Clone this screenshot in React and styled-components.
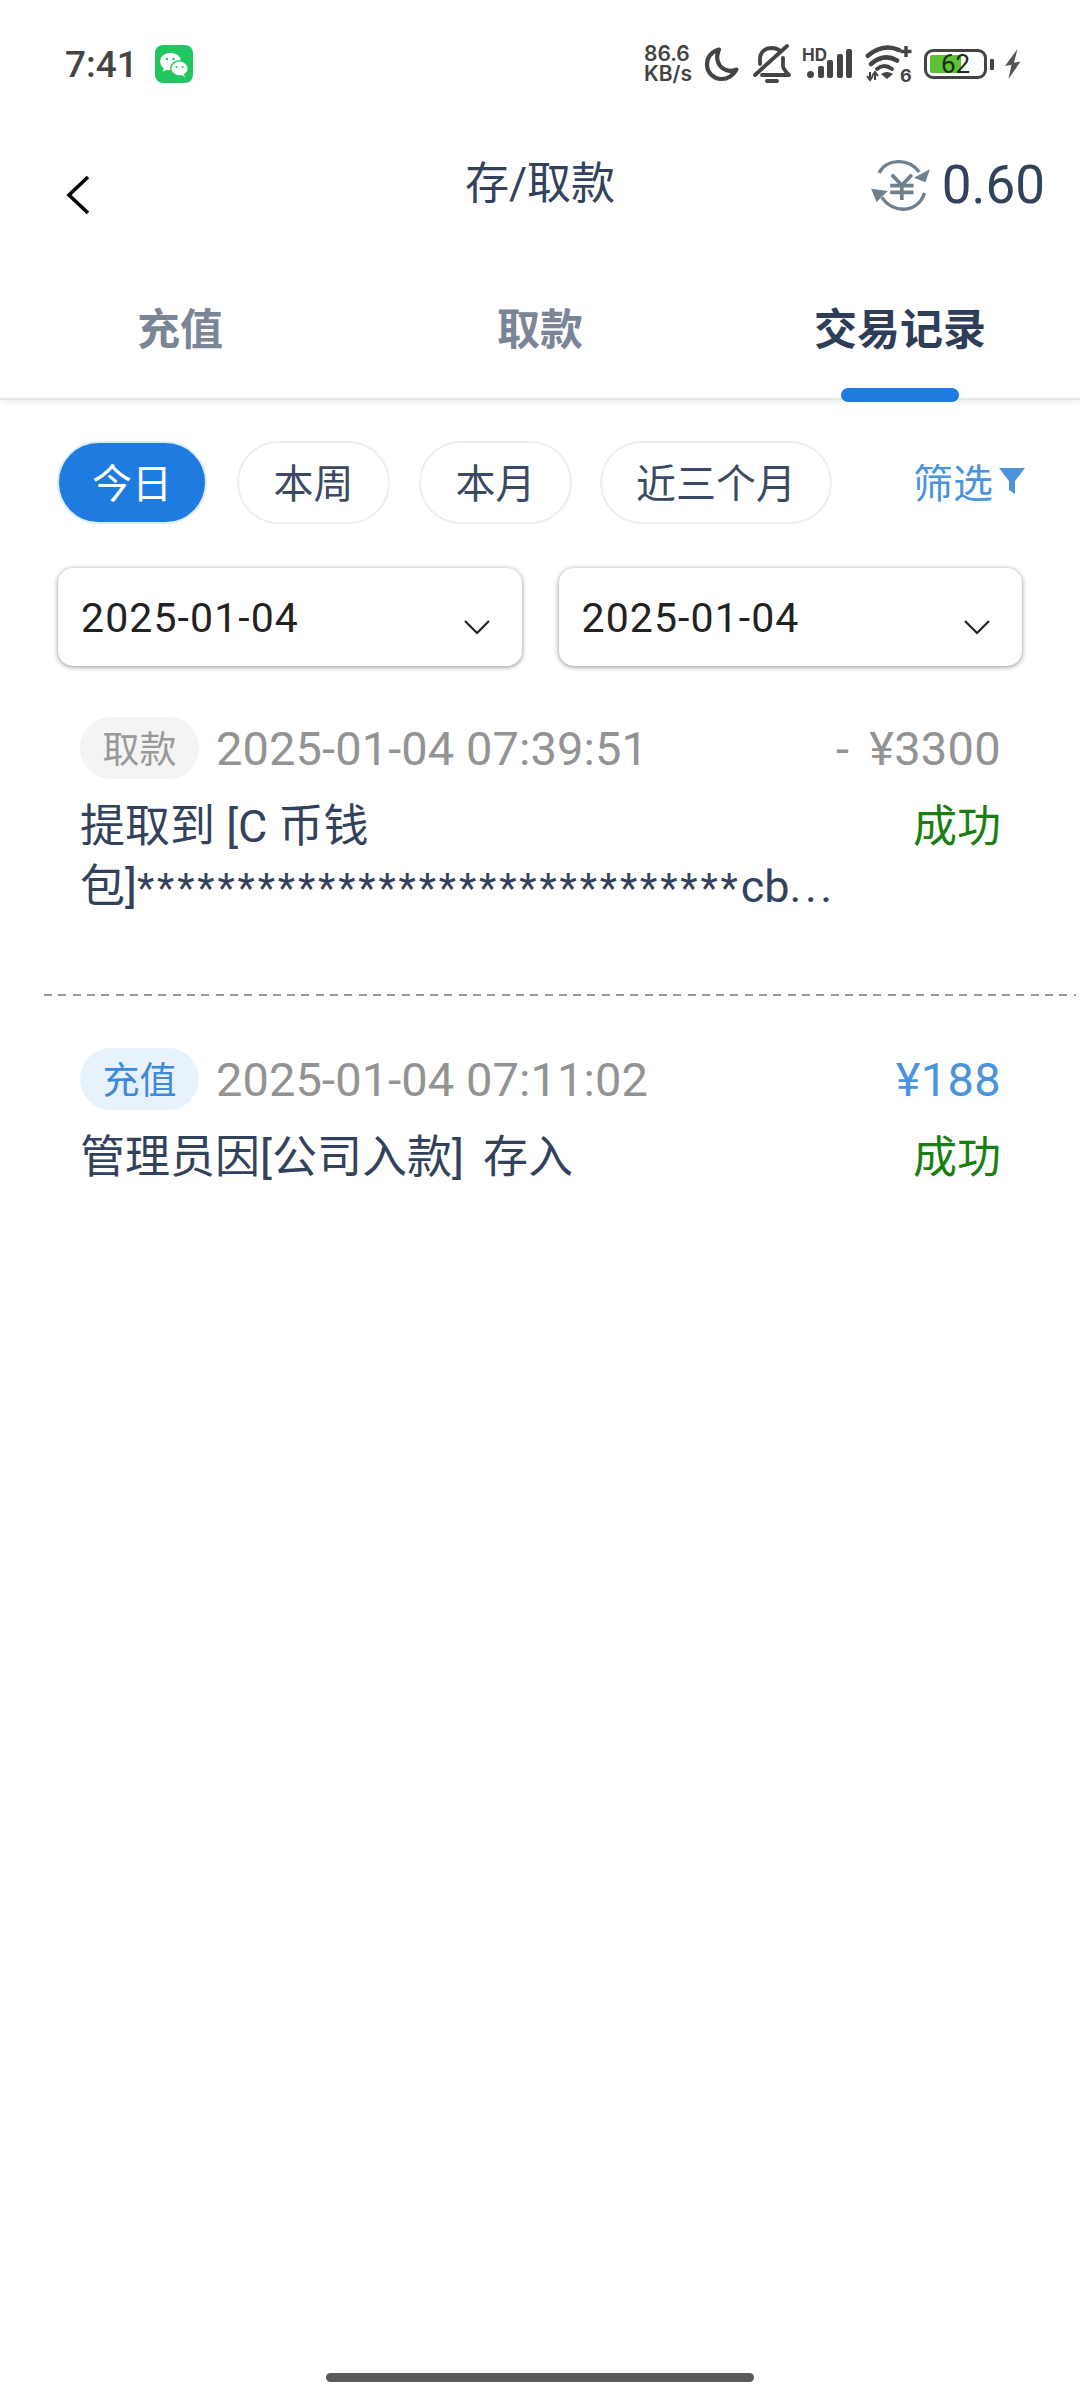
import React from "react";
import styled, { createGlobalStyle } from "styled-components";

const FONT = `Roboto, "Noto Sans CJK SC", sans-serif`;

const Global = createGlobalStyle`
  html, body { margin: 0; padding: 0; background: #fff; }
  body { font-family: ${FONT}; }
  * { box-sizing: border-box; }
`;

const Page = styled.div`
  position: relative;
  width: 1080px;
  height: 2400px;
  background: #fff;
  overflow: hidden;
  display: flex;
  flex-direction: column;
`;

const StatusBar = styled.div`
  height: 128px;
  display: flex;
  align-items: center;
  padding: 0 59px 0 65px;
  color: #444;
`;
const Time = styled.span`
  font-size: 37px;
  font-weight: 500;
  color: #444;
`;
const StatusRight = styled.div`
  margin-left: auto;
  display: flex;
  align-items: center;
`;
const Speed = styled.div`
  font-size: 21px;
  line-height: 20px;
  font-weight: 600;
  font-family: Inter, sans-serif;
  color: #444;
  width: 50px;
  white-space: nowrap;
`;
const IconSvg = styled.svg`
  display: block;
  flex: none;
  overflow: visible;
  margin-left: ${(p) => p.$ml || 0}px;
`;
const BatteryBox = styled.div`
  position: relative;
  width: 63px;
  height: 30px;
  margin-left: 12px;
  border: 3.5px solid #444;
  border-radius: 9px;
  padding: 3px;
  display: flex;
`;
const BatteryFill = styled.div`
  width: 60%;
  background: #5fc236;
  border-radius: 2px;
`;
const BatteryText = styled.span`
  position: absolute;
  left: 0;
  right: 0;
  top: -3.5px;
  text-align: center;
  font-size: 26px;
  line-height: 30px;
  color: #1c2a1c;
  font-family: Roboto, sans-serif;
`;
const BatteryNub = styled.div`
  width: 4px;
  height: 11px;
  background: #444;
  border-radius: 1px;
  margin-left: 3px;
`;

const Header = styled.div`
  height: 120px;
  position: relative;
  display: flex;
  align-items: center;
  justify-content: center;
`;
const BackIcon = styled.svg`
  position: absolute;
  left: 66px;
  top: 47px;
`;
const Title = styled.h1`
  margin: 0 0 16px;
  font-size: 44px;
  font-weight: 400;
  color: #33425c;
`;
const Balance = styled.div`
  position: absolute;
  right: 35px;
  top: 26px;
  display: flex;
  align-items: center;
  gap: 11px;
  font-size: 53px;
  color: #33425c;
  font-weight: 400;
`;

const Tabs = styled.div`
  height: 152px;
  display: grid;
  grid-template-columns: repeat(3, 1fr);
  border-bottom: 2px solid #e8e8e8;
  box-shadow: 0 3px 5px rgba(0, 0, 0, 0.06);
`;
const Tab = styled.div`
  position: relative;
  display: flex;
  justify-content: center;
  padding-top: 56px;
  font-size: 43px;
  line-height: 52px;
  font-weight: 700;
  color: ${(p) => (p.$active ? "#2f3e58" : "#7b8595")};
`;
const TabBar = styled.span`
  position: absolute;
  left: 50%;
  bottom: -4px;
  width: 118px;
  height: 14px;
  margin-left: -59px;
  border-radius: 7px;
  background: #1e7ce0;
`;

const Filters = styled.div`
  display: flex;
  align-items: center;
  padding: 41px 55px 0 57px;
`;
const Chip = styled.div`
  height: 83px;
  width: ${(p) => p.$w}px;
  margin-right: ${(p) => p.$mr}px;
  padding-bottom: 3px;
  border-radius: 42px;
  display: flex;
  align-items: center;
  justify-content: center;
  font-size: 40px;
  color: ${(p) => (p.$active ? "#fff" : "#3b4a63")};
  background: ${(p) => (p.$active ? "#1e7ce0" : "#fff")};
  border: 2.5px solid ${(p) => (p.$active ? "#dcebfb" : "#eeeeef")};
`;
const FilterLink = styled.div`
  margin-left: auto;
  padding-bottom: 4px;
  display: flex;
  align-items: center;
  gap: 6px;
  font-size: 40px;
  color: #4a94de;
`;

const Dates = styled.div`
  display: flex;
  gap: 37px;
  padding: 44px 58px 0;
`;
const DateBox = styled.div`
  flex: 1;
  height: 98px;
  border-radius: 15px;
  background: #fff;
  box-shadow: 0 1px 5px rgba(0, 0, 0, 0.45);
  display: flex;
  align-items: center;
  justify-content: space-between;
  padding: 2px 32px 0 23px;
  font-size: 41px;
  letter-spacing: 1.1px;
  color: #222;
`;
const Chevron = styled.svg`
  margin-top: 18px;
`;

const Record = styled.div`
  padding: ${(p) => (p.$first ? "51px" : "52px")} 79px 0 80px;
  min-height: ${(p) => p.$h}px;
`;
const TopLine = styled.div`
  display: flex;
  align-items: center;
  height: 62px;
`;
const Tag = styled.span`
  width: 119px;
  height: 62px;
  padding-bottom: 2px;
  border-radius: 31px;
  display: flex;
  align-items: center;
  justify-content: center;
  font-size: 37px;
  background: ${(p) => (p.$blue ? "#e7f2fc" : "#f4f4f4")};
  color: ${(p) => (p.$blue ? "#3d8ad8" : "#999")};
`;
const Stamp = styled.span`
  margin-left: 17px;
  font-size: 47px;
  letter-spacing: 0.1px;
  color: #939393;
`;
const Amount = styled.span`
  margin-left: auto;
  font-size: 47px;
  word-spacing: 8px;
  letter-spacing: 0.3px;
  color: ${(p) => (p.$blue ? "#4a94de" : "#939393")};
`;
const BottomLine = styled.div`
  display: flex;
  justify-content: space-between;
  align-items: flex-start;
  margin-top: 18px;
`;
const Desc = styled.div`
  font-size: 45px;
  line-height: 60px;
  color: #33425c;
  white-space: nowrap;
  word-spacing: ${(p) => p.$ws || 0}px;
`;
const Stars = styled.span`
  font-size: 40px;
  letter-spacing: 2.9px;
`;
const Dots = styled.span`
  letter-spacing: 3.5px;
`;
const Status = styled.div`
  font-size: 44px;
  line-height: 60px;
  color: #1a7f12;
`;
const Divider = styled.div`
  height: 2px;
  margin: 0 4px 0 44px;
  background: repeating-linear-gradient(90deg, #999 0 8px, transparent 8px 14.3px);
`;
const HomeBar = styled.div`
  position: absolute;
  left: 326px;
  top: 2373px;
  width: 428px;
  height: 9px;
  border-radius: 5px;
  background: #5a5a5a;
`;

const WeChat = () => (
  <IconSvg $ml={17} width="38" height="38" viewBox="0 0 38 38">
    <rect width="38" height="38" rx="8" fill="#20c65f" />
    <ellipse cx="15.5" cy="16.5" rx="10.5" ry="8.7" fill="#fff" />
    <path d="M9 22l-1 4.5 5.5-2.5z" fill="#fff" />
    <ellipse cx="24.5" cy="23.5" rx="8.8" ry="7.6" fill="#fff" stroke="#20c65f" strokeWidth="1.4" />
    <path d="M28.5 29l2 3-4.5-2z" fill="#fff" />
    <circle cx="12" cy="14" r="1.2" fill="#20c65f" />
    <circle cx="18.5" cy="14" r="1.2" fill="#20c65f" />
    <circle cx="21.5" cy="22" r="1" fill="#20c65f" />
    <circle cx="27.5" cy="22" r="1" fill="#20c65f" />
  </IconSvg>
);

const Moon = () => (
  <IconSvg $ml={10} width="36" height="36" viewBox="0 0 36 36" fill="none">
    <path d="M15 3.5C7.5 6 3 11.5 3 18.5 3 26.5 9.5 33 17.5 33c6.5 0 11.5-3.5 15-9.5-3 1.5-7 2-10.5.5C14 21 11 12 15 3.5z" stroke="#444" strokeWidth="4.2" strokeLinejoin="round" />
  </IconSvg>
);

const BellOff = () => (
  <IconSvg $ml={13} width="38" height="40" viewBox="0 0 38 40" fill="none" stroke="#444" strokeWidth="3.8" strokeLinecap="round" strokeLinejoin="round">
    <path d="M7 20V15C7 8 12 4 19 4c3 0 5 .8 7 2" />
    <path d="M30 14v8c0 3 3 6 6 9H9" />
    <path d="M2 31 34 2" />
    <path d="M14 37h10" />
  </IconSvg>
);

const Signal = () => (
  <IconSvg $ml={9} width="53" height="36" viewBox="-3 0 53 36">
    <text x="-1" y="15" fontSize="17" fontWeight="700" fontFamily="Inter, sans-serif" fill="#444">HD</text>
    <rect x="4" y="25" width="7" height="7" rx="3.5" fill="#444" />
    <rect x="15" y="20" width="6" height="12" rx="2" fill="#444" />
    <rect x="24" y="14" width="6" height="18" rx="2" fill="#444" />
    <rect x="34" y="8" width="6" height="24" rx="2" fill="#444" />
    <rect x="43" y="3" width="6" height="29" rx="2" fill="#444" />
  </IconSvg>
);

const Wifi = () => (
  <IconSvg $ml={13} width="46" height="42" viewBox="0 0 46 42" fill="none">
    <path d="M1.8 12.7Q17 0 33 7" stroke="#444" strokeWidth="4.6" strokeLinecap="round" />
    <path d="M5 21Q18 10 31 17.5" stroke="#444" strokeWidth="4.6" strokeLinecap="round" />
    <path d="M11 26Q18 20 26 26" stroke="#444" strokeWidth="3.8" strokeLinecap="round" />
    <path d="M15 31Q21 27 27 31L21 36z" fill="#444" />
    <path d="M34.5 8.5h11M40 3v11" stroke="#444" strokeWidth="3.4" />
    <path d="M4 29v8M1 33l3 4 3-4M9 37v-8M6 33l3-4 3 4" stroke="#444" strokeWidth="2" />
    <text x="34" y="38.5" fontSize="18" fontWeight="700" fontFamily="Inter, sans-serif" fill="#444">6</text>
  </IconSvg>
);

const Bolt = () => (
  <IconSvg $ml={10} width="17" height="30" viewBox="0 0 17 30">
    <path d="M13.5 0 1 17l6.5-1.2L4.5 30 16.5 12.5l-6.5 1.2z" fill="#555" />
  </IconSvg>
);

const Exchange = () => (
  <svg width="61" height="55" viewBox="25 30 182 165" fill="none">
    <path d="M52 75C72 32 140 28 172 72" stroke="#6f7f8b" strokeWidth="10" />
    <path d="M204 64 191 103 156 89z" fill="#6f7f8b" />
    <path d="M188 135C170 195 95 200 60 148" stroke="#6f7f8b" strokeWidth="10" />
    <path d="M28 122 78 129 44 162z" fill="#6f7f8b" />
    <path d="M90 80l30 32 30-32M85 113h70M85 133h70M120 112v44" stroke="#6f7f8b" strokeWidth="11" />
  </svg>
);

const DateField = ({ value }) => (
  <DateBox>
    {value}
    <Chevron width="26" height="16" viewBox="0 0 26 16" fill="none">
      <path d="M1 2l12 12L25 2" stroke="#222" strokeWidth="2.2" />
    </Chevron>
  </DateBox>
);

export default function App() {
  return (
    <Page>
      <Global />
      <StatusBar>
        <Time>7:41</Time>
        <WeChat />
        <StatusRight>
          <Speed>86.6<br />KB/s</Speed>
          <Moon />
          <BellOff />
          <Signal />
          <Wifi />
          <BatteryBox>
            <BatteryFill />
            <BatteryText>62</BatteryText>
          </BatteryBox>
          <BatteryNub />
          <Bolt />
        </StatusRight>
      </StatusBar>

      <Header>
        <BackIcon width="26" height="40" viewBox="0 0 26 40" fill="none">
          <path d="M22 2 3 20l19 18" stroke="#000" strokeWidth="3.6" />
        </BackIcon>
        <Title>存/取款</Title>
        <Balance>
          <Exchange />
          0.60
        </Balance>
      </Header>

      <Tabs>
        <Tab>充值</Tab>
        <Tab>取款</Tab>
        <Tab $active>
          交易记录
          <TabBar />
        </Tab>
      </Tabs>

      <Filters>
        <Chip $active $w={150} $mr={30}>今日</Chip>
        <Chip $w={153} $mr={29}>本周</Chip>
        <Chip $w={153} $mr={28}>本月</Chip>
        <Chip $w={232} $mr={0}>近三个月</Chip>
        <FilterLink>
          筛选
          <svg width="26" height="30" viewBox="0 0 26 30">
            <path d="M0 2h26L16 15v13l-6-4V15z" fill="#4a94de" />
          </svg>
        </FilterLink>
      </Filters>

      <Dates>
        <DateField value="2025-01-04" />
        <DateField value="2025-01-04" />
      </Dates>

      <Record $first $h={328}>
        <TopLine>
          <Tag>取款</Tag>
          <Stamp>2025-01-04 07:39:51</Stamp>
          <Amount>- ¥3300</Amount>
        </TopLine>
        <BottomLine>
          <Desc>
            提取到 [C 币钱<br />
            包]<Stars>******************************</Stars>cb<Dots>...</Dots>
          </Desc>
          <Status>成功</Status>
        </BottomLine>
      </Record>
      <Divider />
      <Record>
        <TopLine>
          <Tag $blue>充值</Tag>
          <Stamp>2025-01-04 07:11:02</Stamp>
          <Amount $blue>¥188</Amount>
        </TopLine>
        <BottomLine>
          <Desc $ws={8}>管理员因[公司入款] 存入</Desc>
          <Status>成功</Status>
        </BottomLine>
      </Record>
      <HomeBar />
    </Page>
  );
}
